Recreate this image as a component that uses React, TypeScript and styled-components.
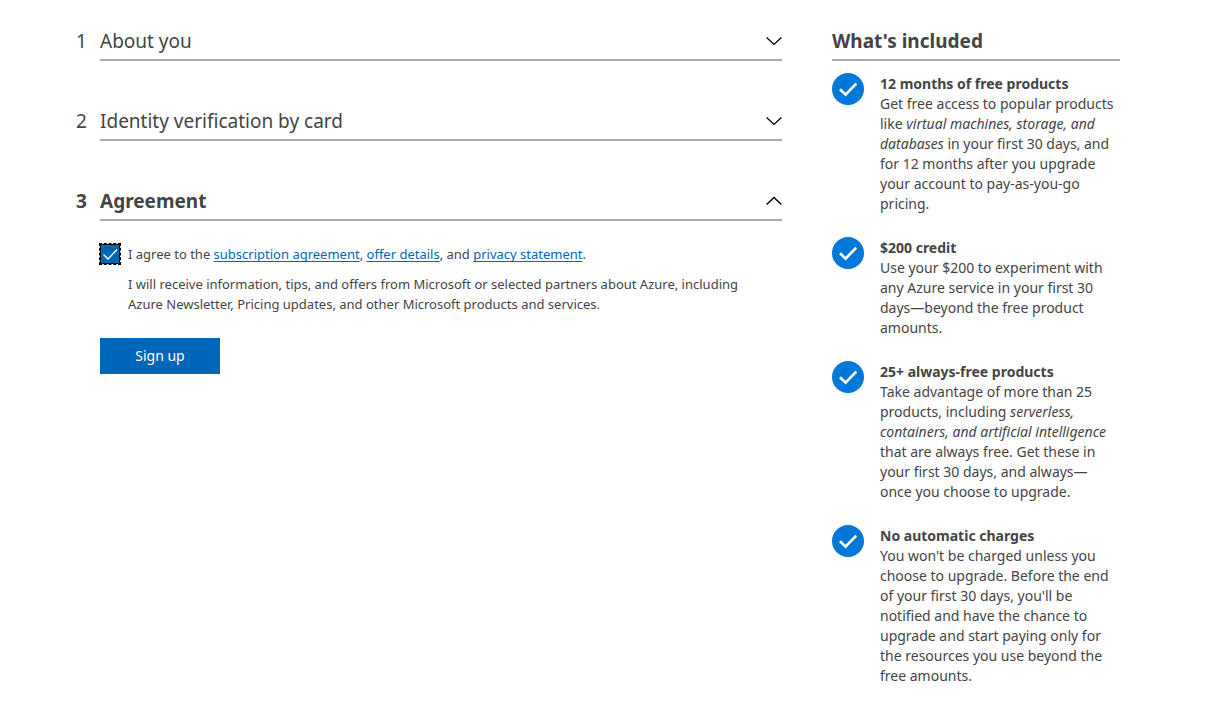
import React, { useState } from "react";
import styled, { createGlobalStyle } from "styled-components";

const GlobalStyle = createGlobalStyle`
  *, *::before, *::after { box-sizing: border-box; }
  body {
    margin: 0;
    background: #fff;
    color: #444;
    font-family: "Segoe UI", "Noto Sans", "Open Sans", sans-serif;
    font-size: 14px;
    line-height: 20px;
  }
`;

const Page = styled.div`
  display: grid;
  grid-template-columns: minmax(0, 1fr) 288px;
  column-gap: 50px;
  align-items: start;
  padding: 21px 98px 16px 76px;
`;

const Steps = styled.main`
  display: flex;
  flex-direction: column;
  gap: 40px;
`;

const Step = styled.section`
  display: grid;
  grid-template-columns: 24px minmax(0, 1fr);
`;

const StepNumber = styled.span<{ $active: boolean }>`
  font-size: 19px;
  line-height: 40px;
  font-weight: ${(p) => (p.$active ? 700 : 400)};
`;

const StepTitle = styled.h2`
  margin: 0;
`;

const StepToggle = styled.button<{ $active: boolean }>`
  display: flex;
  align-items: center;
  justify-content: space-between;
  width: 100%;
  height: 40px;
  padding: 2px 0 0;
  border: 0;
  border-bottom: 2px solid #a9a9a9;
  background: none;
  color: inherit;
  font-family: inherit;
  font-size: 19px;
  font-weight: ${(p) => (p.$active ? 700 : 400)};
  text-align: left;
  cursor: pointer;
`;

const StepBody = styled.div`
  grid-column: 2;
  padding-top: 23px;
  font-size: 13px;
`;

const Consent = styled.div`
  display: flex;
  gap: 8px;
`;

const CheckHolder = styled.span`
  position: relative;
  flex: none;
  width: 20px;
  height: 20px;

  svg {
    position: absolute;
    inset: 0;
    pointer-events: none;
  }
`;

const CheckInput = styled.input`
  appearance: none;
  display: block;
  width: 20px;
  height: 20px;
  margin: 0;
  border: 1px solid #111;
  outline: 1px dashed #000;
  background: #fff;

  &:checked { background: #0067b8; }
`;

const Terms = styled.p`
  margin: 0;
`;

const TextLink = styled.a`
  color: #0067b8;
  text-decoration: underline;
  text-underline-offset: 2px;
  text-decoration-skip-ink: none;
`;

const Notice = styled.p`
  margin: 10px 0 24px;
  padding-left: 28px;
  max-width: 660px;
`;

const SignUp = styled.button`
  display: block;
  min-width: 120px;
  height: 36px;
  padding: 0 12px;
  border: 0;
  background: #0067b8;
  color: #fff;
  font-family: inherit;
  font-size: 14px;
  line-height: 20px;
  cursor: pointer;
`;

const AsideTitle = styled.h2`
  height: 40px;
  margin: 0;
  border-bottom: 2px solid #a9a9a9;
  font-size: 19px;
  font-weight: 700;
  line-height: 40px;
`;

const Benefits = styled.ul`
  display: flex;
  flex-direction: column;
  gap: 24px;
  margin: 0;
  padding: 13px 0 0;
  list-style: none;
`;

const Benefit = styled.li`
  display: grid;
  grid-template-columns: 32px minmax(0, 1fr);
  column-gap: 16px;
  padding-right: 4px;

  svg { margin-top: -1px; }
`;

const BenefitTitle = styled.h3`
  margin: 0;
  font-size: 14px;
  font-weight: 700;
  line-height: 20px;
`;

const BenefitText = styled.p`
  margin: 0;
`;

const Chevron = ({ up }: { up: boolean }) => (
  <svg width="16" height="10" viewBox="0 0 16 10" fill="none" stroke="#000" strokeWidth="1.4" aria-hidden="true">
    <path d={up ? "M0.6 8.4 8 1.4 15.4 8.4" : "M0.6 1.4 8 8.4 15.4 1.4"} />
  </svg>
);

const Badge = () => (
  <svg width="32" height="32" viewBox="0 0 32 32" aria-hidden="true">
    <circle cx="16" cy="16" r="16" fill="#0078d7" />
    <path d="M8 16.2 13.6 21.6 24.2 10.6" fill="none" stroke="#fff" strokeWidth="2.7" />
  </svg>
);

const benefits = [
  {
    title: "12 months of free products",
    text: (
      <>
        Get free access to popular products like <em>virtual machines, storage, and databases</em> in your
        first 30 days, and for 12 months after you upgrade your account to pay-as-you-go pricing.
      </>
    ),
  },
  {
    title: "$200 credit",
    text: <>Use your $200 to experiment with any Azure service in your first 30 days—beyond the free product amounts.</>,
  },
  {
    title: "25+ always-free products",
    text: (
      <>
        Take advantage of more than 25 products, including{" "}
        <em>serverless, containers, and artificial intelligence</em> that are always free. Get these in your
        first 30 days, and always—once you choose to upgrade.
      </>
    ),
  },
  {
    title: "No automatic charges",
    text: (
      <>
        You won't be charged unless you choose to upgrade. Before the end of your first 30 days, you'll be
        notified and have the chance to upgrade and start paying only for the resources you use beyond the
        free amounts.
      </>
    ),
  },
];

const titles = ["About you", "Identity verification by card", "Agreement"];

export default function App() {
  const [active, setActive] = useState(2);
  const [agreed, setAgreed] = useState(true);

  return (
    <>
      <GlobalStyle />
      <Page>
        <Steps>
          {titles.map((title, i) => (
            <Step key={title}>
              <StepNumber $active={i === active}>{i + 1}</StepNumber>
              <StepTitle>
                <StepToggle
                  type="button"
                  $active={i === active}
                  aria-expanded={i === active}
                  onClick={() => setActive(i)}
                >
                  {title}
                  <Chevron up={i === active} />
                </StepToggle>
              </StepTitle>
              {i === 2 && active === 2 && (
                <StepBody>
                  <Consent>
                    <CheckHolder>
                      <CheckInput
                        id="agree"
                        type="checkbox"
                        checked={agreed}
                        onChange={(e) => setAgreed(e.target.checked)}
                      />
                      {agreed && (
                        <svg width="20" height="20" viewBox="0 0 20 20" fill="none" stroke="#fff" strokeWidth="1.3" aria-hidden="true">
                          <path d="M3.5 10.5 8 15 17 5.5" />
                        </svg>
                      )}
                    </CheckHolder>
                    <Terms>
                      <label htmlFor="agree">I agree to the </label>
                      <TextLink href="#subscription">subscription agreement</TextLink>,{" "}
                      <TextLink href="#offer">offer details</TextLink>, and{" "}
                      <TextLink href="#privacy">privacy statement</TextLink>.
                    </Terms>
                  </Consent>
                  <Notice>
                    I will receive information, tips, and offers from Microsoft or selected partners about Azure,
                    including Azure Newsletter, Pricing updates, and other Microsoft products and services.
                  </Notice>
                  <SignUp type="button">Sign up</SignUp>
                </StepBody>
              )}
            </Step>
          ))}
        </Steps>
        <aside>
          <AsideTitle>What's included</AsideTitle>
          <Benefits>
            {benefits.map((b) => (
              <Benefit key={b.title}>
                <Badge />
                <div>
                  <BenefitTitle>{b.title}</BenefitTitle>
                  <BenefitText>{b.text}</BenefitText>
                </div>
              </Benefit>
            ))}
          </Benefits>
        </aside>
      </Page>
    </>
  );
}
